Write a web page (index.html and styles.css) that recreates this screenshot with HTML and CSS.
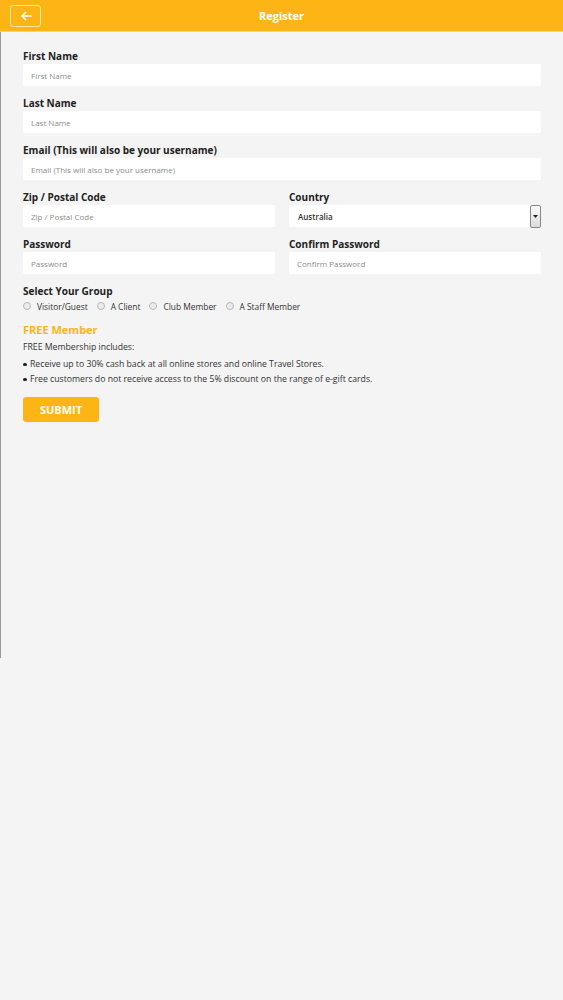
FILE: index.html
```html
<!DOCTYPE html>
<html>
<head>
<meta charset="utf-8">
<link rel="stylesheet" href="styles.css">
</head>
<body>
<header class="topbar">
  <button class="back" type="button" aria-label="Back">
    <svg width="12" height="10" viewBox="0 0 12 10"><path d="M11 5H2M5.5 1.5L2 5l3.5 3.5" fill="none" stroke="#fff" stroke-width="1.6" stroke-linecap="round" stroke-linejoin="round"/></svg>
  </button>
  <h1 class="title">Register</h1>
</header>
<main class="page">
  <form class="form">
    <div class="field">
      <label class="label">First Name</label>
      <input class="input" placeholder="First Name">
    </div>
    <div class="field">
      <label class="label">Last Name</label>
      <input class="input" placeholder="Last Name">
    </div>
    <div class="field">
      <label class="label">Email (This will also be your username)</label>
      <input class="input" placeholder="Email (This will also be your username)">
    </div>
    <div class="row">
      <div class="field">
        <label class="label">Zip / Postal Code</label>
        <input class="input" placeholder="Zip / Postal Code">
      </div>
      <div class="field">
        <label class="label">Country</label>
        <div class="select">
          <span class="select-value">Australia</span>
          <span class="select-btn"><svg width="5" height="3" viewBox="0 0 5 3"><path d="M0 0h5L2.5 3z" fill="#222"/></svg></span>
        </div>
      </div>
    </div>
    <div class="row">
      <div class="field">
        <label class="label">Password</label>
        <input class="input" placeholder="Password">
      </div>
      <div class="field">
        <label class="label">Confirm Password</label>
        <input class="input" placeholder="Confirm Password">
      </div>
    </div>
    <div class="group">
      <div class="label">Select Your Group</div>
      <div class="radios">
        <label class="radio"><span class="dot"></span>Visitor/Guest</label>
        <label class="radio"><span class="dot"></span>A Client</label>
        <label class="radio"><span class="dot"></span>Club Member</label>
        <label class="radio"><span class="dot"></span>A Staff Member</label>
      </div>
    </div>
    <div class="info">
      <div class="info-title">FREE Member</div>
      <p class="info-text">FREE Membership includes:</p>
      <ul class="bullets">
        <li>Receive up to 30% cash back at all online stores and online Travel Stores.</li>
        <li>Free customers do not receive access to the 5% discount on the range of e-gift cards.</li>
      </ul>
    </div>
    <button class="submit" type="button">SUBMIT</button>
  </form>
</main>
</body>
</html>
```
FILE: styles.css
```css
* { box-sizing: border-box; }
html, body { margin: 0; padding: 0; }
body {
  background: #f4f4f4;
  font-family: "Open Sans", "Noto Sans", sans-serif;
  color: #222;
  width: 563px;
  height: 1000px;
}
.topbar {
  height: 32px;
  background: #fdb516;
  border-bottom: 1px solid #fbd77a;
  display: flex;
  align-items: center;
  position: relative;
  padding-left: 10px;
}
.back {
  width: 31px;
  height: 22px;
  border: 1px solid #fde7a4;
  border-radius: 3px;
  background: transparent;
  display: flex;
  align-items: center;
  justify-content: center;
  padding: 0;
}
.title {
  position: absolute;
  left: 0;
  right: 0;
  top: 0;
  margin: 0;
  line-height: 31px;
  text-align: center;
  font-size: 11px;
  font-weight: 700;
  color: #fff;
  pointer-events: none;
}
.page {
  border-left: 1px solid #9a9a9a;
  height: 626px;
  padding: 16px 22px 0 22px;
}
.form { display: flex; flex-direction: column; }
.field { display: flex; flex-direction: column; margin-bottom: 9px; min-width: 0; }
.row { display: grid; grid-template-columns: 1fr 1fr; column-gap: 14px; }
.label {
  font-size: 10px;
  font-weight: 700;
  line-height: 16px;
  color: #222;
}
.input {
  height: 22px;
  border: 0;
  background: #fff;
  border-radius: 2px;
  padding: 0 8px;
  font-family: inherit;
  font-size: 8px;
  color: #222;
  outline: none;
}
.input::placeholder { color: #8c8c8c; }
.select {
  height: 22px;
  background: #fff;
  border-radius: 2px;
  display: flex;
  align-items: center;
  padding-left: 9px;
  position: relative;
}
.select-value { font-size: 8px; font-weight: 600; color: #333; flex: 1; }
.select-btn {
  width: 11px;
  height: 23px;
  border: 1px solid #888;
  border-radius: 2px;
  background: linear-gradient(#fafafa, #dcdcdc);
  display: flex;
  align-items: center;
  justify-content: center;
}
.group { margin-top: 0; }
.radios { display: flex; align-items: center; height: 16px; margin-top: -1px; }
.radio {
  display: flex;
  align-items: center;
  font-size: 8.4px;
  color: #333;
  margin-right: 9px;
}
.dot {
  width: 8px;
  height: 8px;
  border-radius: 50%;
  border: 1px solid #b5b5b5;
  background: radial-gradient(circle, #e6e6e6, #f4f4f4);
  margin: 0 6px 0 0;
}
.info { margin-top: 8px; }
.info-title { color: #fdb516; font-weight: 700; font-size: 11px; line-height: 16px; }
.info-text { margin: 2px 0 0; font-size: 8.7px; line-height: 15px; color: #333; }
.bullets { list-style: none; margin: 2px 0 0; padding: 0; }
.bullets li { font-size: 8.7px; line-height: 15px; color: #333; position: relative; padding-left: 7px; }
.bullets li::before {
  content: "";
  position: absolute;
  left: 0;
  top: 5.5px;
  width: 3.5px;
  height: 3.5px;
  border-radius: 50%;
  background: #222;
}
.submit {
  margin-top: 10px;
  width: 76px;
  height: 25px;
  border: 0;
  border-radius: 3px;
  background: #fdb516;
  color: #fff;
  font-family: inherit;
  font-weight: 700;
  font-size: 11px;
  padding: 0;
}
```
